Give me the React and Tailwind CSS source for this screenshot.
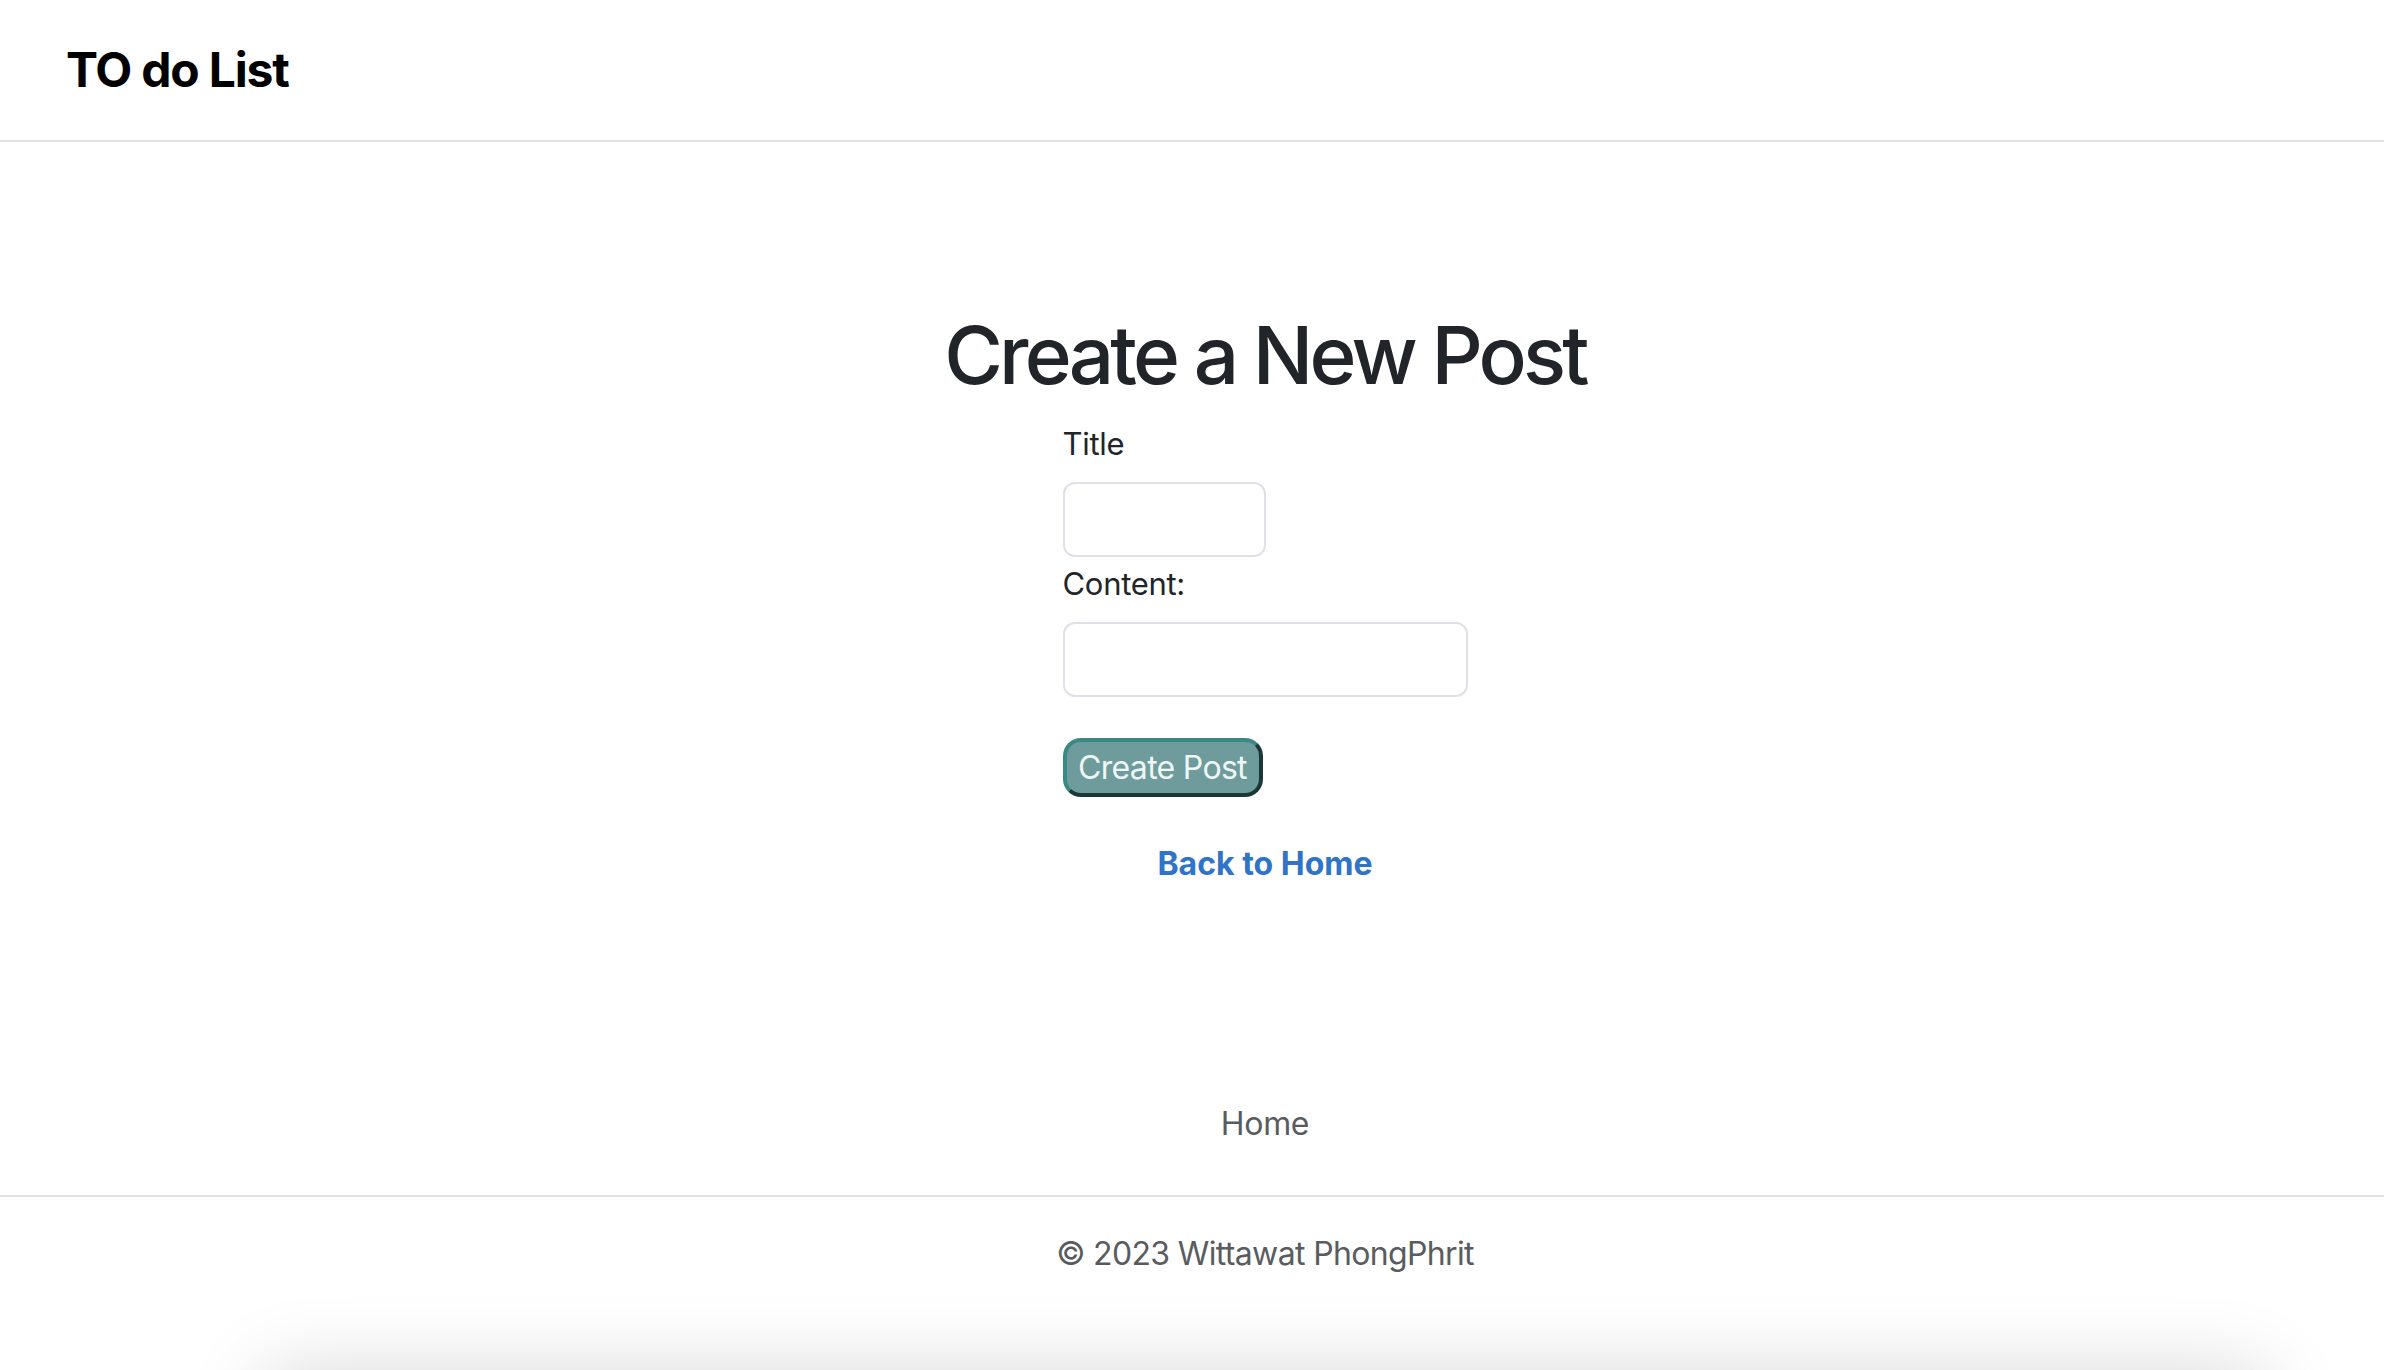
function App() {
  return (
    <div className="min-h-screen w-full bg-white font-['Inter','Noto_Sans',sans-serif] overflow-hidden">
      <header className="h-[142px] border-b-2 border-[#dee2e6] flex items-center pl-[66px]">
        <h2 className="text-[48px] leading-[57.6px] font-bold tracking-[-1.2px] text-black">TO do List</h2>
      </header>

      <main className="pl-[146px] text-center">
        <h1 className="mt-[165px] text-[80px] leading-[96px] font-medium tracking-[-3.8px] text-[#212529]">
          Create a New Post
        </h1>
        <form className="w-[405px] mx-auto text-left" onSubmit={(e) => e.preventDefault()}>
          <label className="block mt-[18px] text-[31px] leading-[45px] tracking-[-0.3px] text-[#212529]">Title</label>
          <input
            type="text"
            className="block mt-[16px] w-[203px] h-[75px] border-2 border-[#dee2e6] rounded-[12px] bg-white"
          />
          <label className="block mt-[4px] text-[31px] leading-[45px] tracking-[-0.3px] text-[#212529]">Content:</label>
          <input
            type="text"
            className="block mt-[16px] w-full h-[75px] border-2 border-[#dee2e6] rounded-[12px] bg-white"
          />
          <button
            type="submit"
            className="block mt-[41px] w-[200px] h-[59px] rounded-[18px] border-4 border-t-[#3a8983] border-l-[#3a8983] border-b-[#1b3836] border-r-[#1b3836] bg-[#6e9c9c] text-[32px] leading-none tracking-[-0.7px] text-[#eef6f6]"
          >
            Create Post
          </button>
        </form>
        <a href="#" className="block mt-[44px] text-[32px] leading-[45px] font-bold text-[#3074c8]">
          Back to Home
        </a>
      </main>

      <footer className="mt-[215px]">
        <div className="pl-[146px] text-center">
          <a href="#" className="text-[32px] leading-[45px] tracking-[-0.3px] text-[#595c5f]">Home</a>
        </div>
        <div className="mt-[49px] border-t-2 border-[#dee2e6]" />
        <p className="pl-[146px] mt-[34px] text-center text-[32px] leading-[45px] tracking-[-0.65px] text-[#595c5f]">
          © 2023 Wittawat PhongPhrit
        </p>
      </footer>

      <div className="pl-[146px] mt-[96px]">
        <div className="mx-auto w-[2000px] h-[200px] bg-white shadow-[0_0_80px_rgba(0,0,0,0.16)]" />
      </div>
    </div>
  );
}

export default App;
